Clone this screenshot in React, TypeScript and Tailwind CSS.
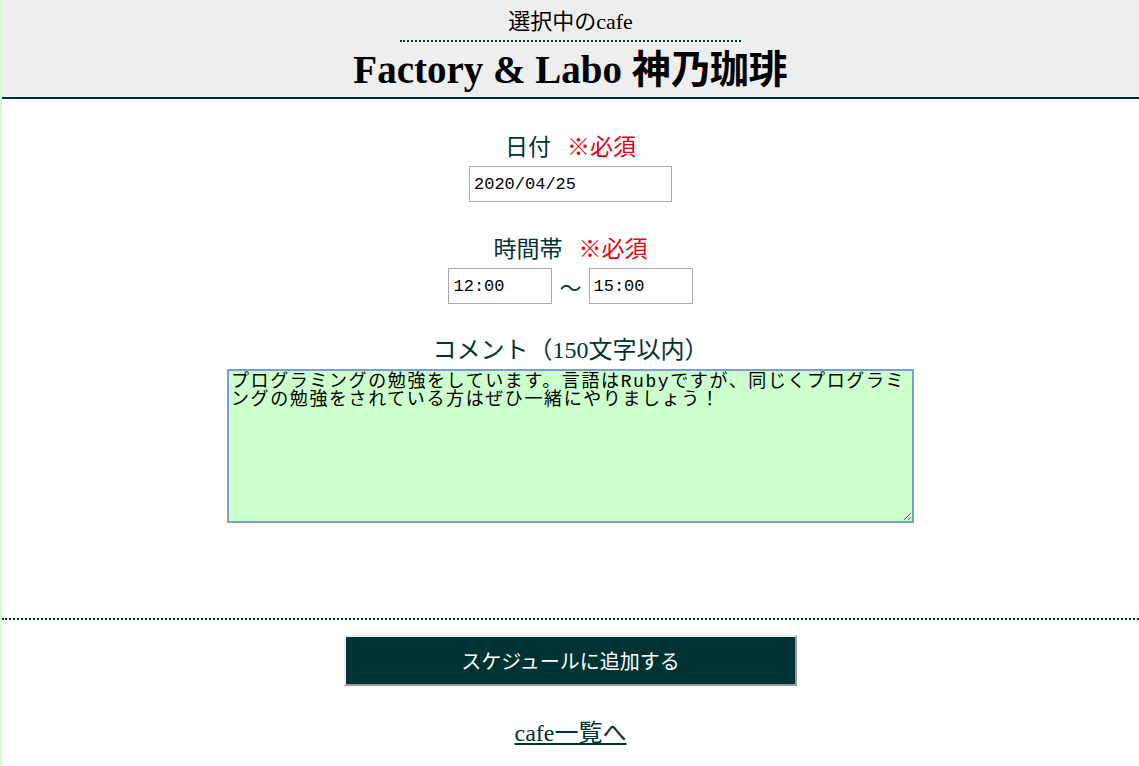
import { useState } from 'react';

const serif = "font-['Liberation_Serif','Noto_Sans_CJK_JP',serif]";

export default function App() {
  const [date, setDate] = useState('2020/04/25');
  const [start, setStart] = useState('12:00');
  const [end, setEnd] = useState('15:00');
  const [comment, setComment] = useState(
    'プログラミングの勉強をしています。言語はRubyですが、同じくプログラミングの勉強をされている方はぜひ一緒にやりましょう！'
  );

  return (
    <div className={`min-h-[766px] border-l-2 border-[#ccffcc] bg-white text-[#003333] ${serif}`}>
      <header className="bg-[#eeeeee] border-b-2 border-[#003333] pt-[8px] pb-[7px] text-center">
        <div className="flex justify-center">
          <p className="w-[341px] border-b-2 border-dotted border-[#003333] pb-[4px] text-[22px] leading-[28px] text-black">
            選択中のcafe
          </p>
        </div>
        <h1 className="mt-[8px] text-[39px] leading-[40px] font-bold text-black">
          Factory &amp; Labo 神乃珈琲
        </h1>
      </header>

      <main className="flex flex-col items-center">
        <div className="mt-[31px] flex gap-[16px] text-[23px] leading-[30px] font-['Noto_Sans_CJK_JP',sans-serif]">
          <span>日付</span>
          <span className="text-[#e60012]">※必須</span>
        </div>
        <input
          value={date}
          onChange={e => setDate(e.target.value)}
          className="mt-[6px] h-[36px] w-[203px] border border-[#aaaaaa] bg-white px-[4px] text-[17px] text-black font-['Liberation_Mono',monospace] outline-none"
        />

        <div className="mt-[30px] flex gap-[16px] text-[23px] leading-[30px] font-['Noto_Sans_CJK_JP',sans-serif]">
          <span>時間帯</span>
          <span className="text-[#e60012]">※必須</span>
        </div>
        <div className="mt-[6px] flex items-center gap-[7px]">
          <input
            value={start}
            onChange={e => setStart(e.target.value)}
            className="h-[36px] w-[104px] border border-[#aaaaaa] bg-white px-[4px] text-[17px] text-black font-['Liberation_Mono',monospace] outline-none"
          />
          <span className="text-[22px] leading-none font-['Noto_Sans_CJK_JP',sans-serif]">〜</span>
          <input
            value={end}
            onChange={e => setEnd(e.target.value)}
            className="h-[36px] w-[104px] border border-[#aaaaaa] bg-white px-[4px] text-[17px] text-black font-['Liberation_Mono',monospace] outline-none"
          />
        </div>

        <p className="mt-[31px] text-[24px] leading-[30px]">コメント（150文字以内）</p>
        <textarea
          value={comment}
          onChange={e => setComment(e.target.value)}
          className="mt-[4px] h-[154px] w-[687px] resize border-2 border-[#7a9fd8] bg-[#ccffcc] p-[2px] text-[18px] leading-[18px] tracking-[1.6px] text-black font-['Liberation_Mono','Noto_Sans_CJK_JP',monospace] outline-none"
        />
      </main>

      <div className="mt-[95px] border-b-2 border-dotted border-[#003333]" />

      <div className="flex flex-col items-center">
        <button className="mt-[15px] h-[51px] w-[453px] border-2 border-t-[#eeeeee] border-l-[#eeeeee] border-r-[#999999] border-b-[#999999] bg-[#003333] text-[20px] text-white font-['Noto_Sans_CJK_JP',sans-serif]">
          スケジュールに追加する
        </button>
        <a href="#" className="mt-[32px] text-[24px] leading-[30px] text-[#003333] underline">
          cafe一覧へ
        </a>
      </div>
    </div>
  );
}
